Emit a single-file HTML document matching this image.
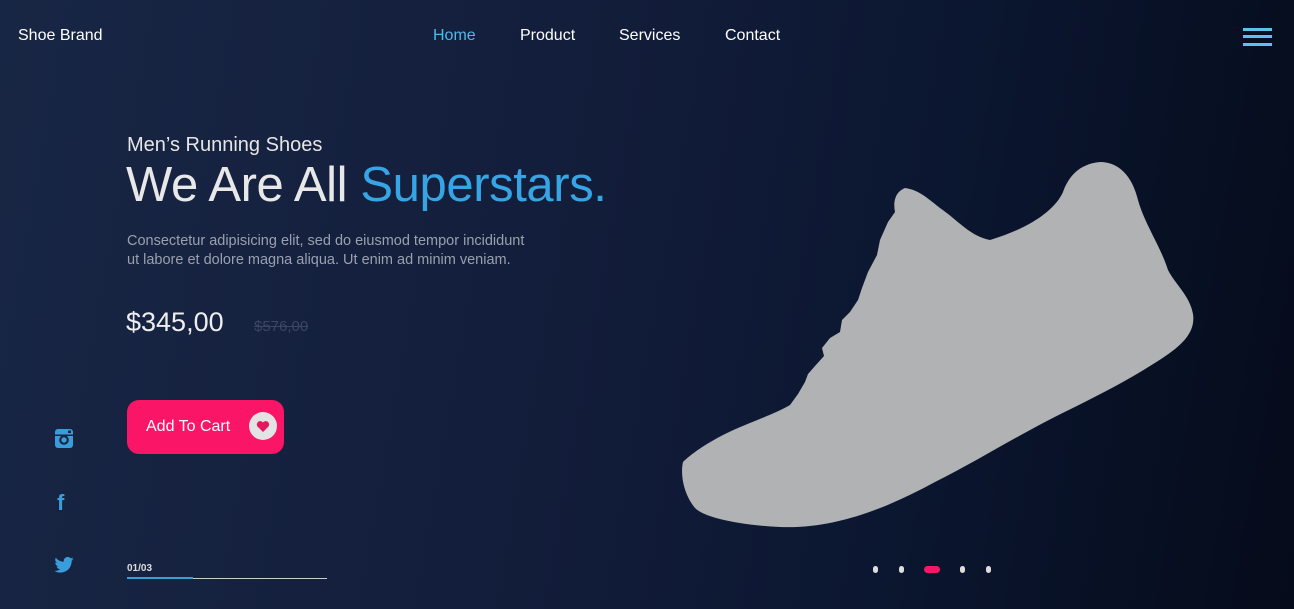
<!DOCTYPE html>
<html><head><meta charset="utf-8"><style>
*{margin:0;padding:0;box-sizing:border-box}
body{width:1294px;height:609px;overflow:hidden;font-family:"Liberation Sans",sans-serif;background:linear-gradient(100deg,#182645 0%,#121d3a 45%,#0b1630 70%,#050b1a 100%);position:relative;color:#fff}
.a{position:absolute}
.nav a{position:absolute;top:27px;font-size:16px;color:#fff;text-decoration:none}
</style></head><body>
<div class="a" style="left:18px;top:27px;font-size:16px">Shoe Brand</div>
<div class="nav">
<a style="left:433px;color:#4fb8ec">Home</a>
<a style="left:520px">Product</a>
<a style="left:619px">Services</a>
<a style="left:725px">Contact</a>
</div>
<div class="a" style="left:1243px;top:28px;width:29px;height:3px;background:#5bc3eb"></div>
<div class="a" style="left:1243px;top:35px;width:29px;height:3px;background:#5bc3eb"></div>
<div class="a" style="left:1243px;top:43px;width:29px;height:3px;background:#5bc3eb"></div>

<div class="a" style="left:127px;top:134px;font-size:20px;color:#e6e6e6">Men’s Running Shoes</div>
<div class="a" style="left:126px;top:157px;font-size:49px;color:#e8e8e8;letter-spacing:-0.4px;white-space:nowrap">We Are All <span style="color:#37a4e4">Superstars.</span></div>
<div class="a" style="left:127px;top:232px;font-size:14.5px;line-height:19px;color:#9aa0ad;width:412px">Consectetur adipisicing elit, sed do eiusmod tempor incididunt ut labore et dolore magna aliqua. Ut enim ad minim veniam.</div>
<div class="a" style="left:126px;top:307px;font-size:27px;color:#eee">$345,00</div>
<div class="a" style="left:254px;top:318px;font-size:15px;color:#3b4660;text-decoration:line-through">$576,00</div>

<div class="a" style="left:127px;top:400px;width:157px;height:54px;background:#fb1566;border-radius:12px"></div>
<div class="a" style="left:146px;top:418px;font-size:16px;color:#fff">Add To Cart</div>
<div class="a" style="left:249px;top:412px;width:28px;height:28px;border-radius:50%;background:#e3e3e3"></div>
<svg class="a" style="left:256px;top:420px" width="14" height="13" viewBox="0 0 14 13"><path d="M7 12 L1.5 6.5 A3.2 3.2 0 0 1 7 2.5 A3.2 3.2 0 0 1 12.5 6.5 Z" fill="#e3195f"/></svg>

<svg class="a" style="left:55px;top:429px" width="18" height="19" viewBox="0 0 18 19"><rect x="0" y="0" width="18" height="19" rx="3" fill="#3a9ddb"/><rect x="0" y="5.5" width="18" height="1.5" fill="#172441"/><circle cx="9" cy="11" r="4.8" fill="#172441"/><circle cx="9" cy="11" r="2.7" fill="#3a9ddb"/><rect x="13" y="1.5" width="3" height="2.5" fill="#172441"/></svg>
<div class="a" style="left:57px;top:490px;font-size:22px;font-weight:bold;color:#3a9ddb">f</div>
<svg class="a" style="left:54px;top:557px" width="20" height="16" viewBox="0 0 24 20"><path d="M24 2.4a9.8 9.8 0 0 1-2.8.8A4.9 4.9 0 0 0 23.3.4a9.9 9.9 0 0 1-3.1 1.2A4.9 4.9 0 0 0 11.8 6 14 14 0 0 1 1.7.9a4.9 4.9 0 0 0 1.5 6.6A4.9 4.9 0 0 1 1 6.9a4.9 4.9 0 0 0 3.9 4.8 4.9 4.9 0 0 1-2.2.1 4.9 4.9 0 0 0 4.6 3.4A9.9 9.9 0 0 1 0 17.3 14 14 0 0 0 7.5 19.5c9.1 0 14-7.5 14-14v-.6A10 10 0 0 0 24 2.4z" fill="#3a9ddb"/></svg>

<div class="a" style="left:127px;top:563px;font-size:10px;font-weight:bold;color:#ddd">01/03</div>
<div class="a" style="left:127px;top:578px;width:200px;height:1px;background:#ccc"></div>
<div class="a" style="left:127px;top:577px;width:66px;height:2px;background:#3a9ddb"></div>

<svg class="a" style="left:0;top:0" width="1294" height="609"><path fill="#b1b2b4" d="M683 462 C680 475 684 495 695 508 C705 518 740 525 780 527 C830 529 880 512 935 482 C975 462 1005 443 1045 422 C1080 404 1115 388 1150 366 C1180 348 1196 334 1193 314 C1190 296 1175 284 1168 270 C1160 245 1145 225 1138 200 C1132 175 1118 162 1100 162 C1078 164 1068 178 1063 192 C1055 210 1030 228 990 240 C970 236 960 222 940 208 C925 196 918 190 905 188 C895 192 893 202 895 212 L888 222 L880 240 L877 255 L868 272 L862 288 L858 300 L850 312 L842 320 L840 332 L830 338 L822 348 L824 356 L815 366 L808 374 L805 382 L798 394 L790 405 C775 414 750 422 725 434 C705 444 690 455 683 462 Z"/></svg>

<div class="a" style="left:873px;top:566px;width:5px;height:7px;border-radius:3px;background:#ddd"></div>
<div class="a" style="left:899px;top:566px;width:5px;height:7px;border-radius:3px;background:#ddd"></div>
<div class="a" style="left:924px;top:566px;width:16px;height:7px;border-radius:4px;background:#fb1566"></div>
<div class="a" style="left:960px;top:566px;width:5px;height:7px;border-radius:3px;background:#ddd"></div>
<div class="a" style="left:986px;top:566px;width:5px;height:7px;border-radius:3px;background:#ddd"></div>
</body></html>
